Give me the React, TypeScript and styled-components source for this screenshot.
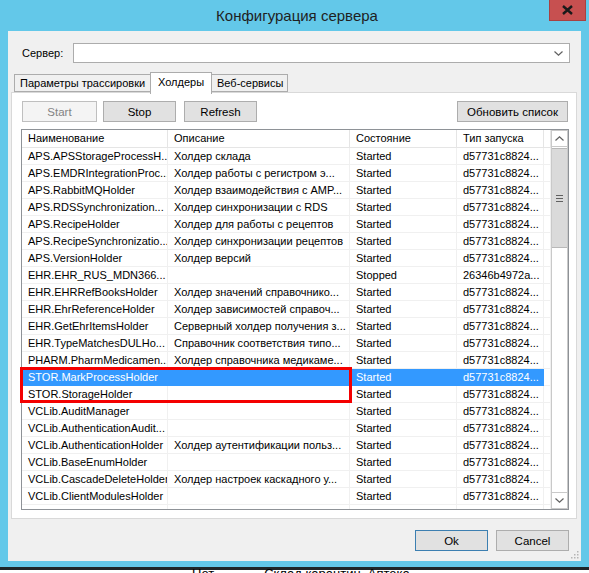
import styled, { createGlobalStyle } from 'styled-components';

const GlobalStyle = createGlobalStyle`
  html, body {
    margin: 0;
    padding: 0;
    background: #fff;
  }
  body {
    font-family: 'Liberation Sans', Arial, sans-serif;
    font-size: 11px;
    color: #000;
  }
  * {
    box-sizing: border-box;
  }
`;

const Screen = styled.div`
  width: 589px;
  height: 573px;
  overflow: hidden;
  background: #fff;
`;

const Window = styled.div`
  display: flex;
  flex-direction: column;
  height: 570px;
  padding: 0 8px 6px 8px;
  background: #63c8e9;
  border-bottom: 3px solid #1e2629;
`;

const TitleBar = styled.div`
  display: grid;
  grid-template-columns: 1fr auto 1fr;
  align-items: start;
  height: 31px;
  margin-right: -5px;
`;

const Title = styled.div`
  grid-column: 2;
  padding-top: 7px;
  font-size: 15px;
  color: #1f1f1f;
`;

const CloseButton = styled.div`
  grid-column: 3;
  justify-self: end;
  display: flex;
  align-items: center;
  justify-content: center;
  width: 37px;
  height: 21px;
  background: #c75050;
  border: 1px solid #a84141;
  border-top: none;
`;

const Client = styled.div`
  position: relative;
  display: flex;
  flex-direction: column;
  height: 530px;
  background: #f0f0f0;
`;

const ServerRow = styled.div`
  display: flex;
  align-items: center;
  padding: 12px 0 0 14px;
`;

const Label = styled.div`
  width: 51px;
`;

const Combo = styled.div`
  display: flex;
  align-items: center;
  justify-content: flex-end;
  width: 497px;
  height: 20px;
  padding-right: 6px;
  background: #fff;
  border: 1px solid #acacac;
`;

const TabStrip = styled.div`
  display: flex;
  align-items: flex-end;
  height: 20px;
  margin-top: 9px;
  padding-left: 6px;
`;

const Tab = styled.div<{ $active?: boolean; $width: number }>`
  position: relative;
  z-index: ${({ $active }) => ($active ? 1 : 0)};
  width: ${({ $width }) => $width}px;
  height: ${({ $active }) => ($active ? 22 : 18)}px;
  margin-bottom: ${({ $active }) => ($active ? -2 : 0)}px;
  margin-left: -1px;
  padding: ${({ $active }) => ($active ? '3px 0 0 7px' : '2px 0 0 5px')};
  background: ${({ $active }) => ($active ? '#fff' : '#f0f0f0')};
  border: 1px solid #acacac;
  border-bottom: ${({ $active }) => ($active ? 'none' : '1px solid #acacac')};
  white-space: nowrap;

  &:first-child {
    margin-left: 0;
  }
`;

const Panel = styled.div`
  display: flex;
  flex-direction: column;
  height: 427px;
  margin: 0 4px 0 3px;
  background: #fff;
  border: 1px solid #d9d9d9;
`;

const Toolbar = styled.div`
  display: flex;
  align-items: center;
  padding: 8px 8px 0 10px;
`;

const Button = styled.div<{ $width: number; $disabled?: boolean; $default?: boolean }>`
  display: flex;
  align-items: center;
  justify-content: center;
  width: ${({ $width }) => $width}px;
  height: 21px;
  font-size: 11.5px;
  background: ${({ $disabled }) => ($disabled ? '#f4f4f4' : '#e1e1e1')};
  border: 1px solid
    ${({ $disabled, $default }) => ($disabled ? '#bfbfbf' : $default ? '#3c7fb1' : '#adadad')};
  color: ${({ $disabled }) => ($disabled ? '#838383' : '#000')};
`;

const ToolbarGap = styled.div<{ $w: number }>`
  width: ${({ $w }) => $w}px;
  flex: none;
`;

const Spacer = styled.div`
  flex: 1;
`;

const List = styled.div`
  position: relative;
  display: flex;
  width: 548px;
  height: 381px;
  margin: 7px 0 0 9px;
  border: 1px solid #8e9297;
`;

const Table = styled.div`
  flex: 1;
  overflow: hidden;
`;

const columns = '146px 182px 107px 87px 1fr';

const HeaderRow = styled.div`
  display: grid;
  grid-template-columns: ${columns};
  height: 18px;
  border-bottom: 1px solid #e5e5e5;
`;

const HeaderCell = styled.div`
  padding: 2px 0 0 6px;
  border-right: 1px solid #e5e5e5;
  white-space: nowrap;
  overflow: hidden;
`;

const Row = styled.div<{ $selected?: boolean }>`
  display: grid;
  grid-template-columns: ${columns};
  height: 17px;
  color: ${({ $selected }) => ($selected ? '#fff' : '#000')};
`;

const Cell = styled.div<{ $selected?: boolean }>`
  height: 17px;
  padding: 1px 0 0 6px;
  line-height: 15px;
  white-space: nowrap;
  overflow: hidden;
  background: ${({ $selected }) => ($selected ? '#3399ff' : 'transparent')};
  border-right: 1px solid ${({ $selected }) => ($selected ? '#3399ff' : '#f0f0f0')};
  border-bottom: 1px solid ${({ $selected }) => ($selected ? '#3399ff' : '#f0f0f0')};
`;

const Scrollbar = styled.div`
  display: flex;
  flex-direction: column;
  width: 17px;
  background: #fff;
  border-left: 1px solid #c9c9c9;
  border-right: 1px solid #c9c9c9;
`;

const ArrowBox = styled.div`
  display: flex;
  align-items: center;
  justify-content: center;
  height: 17px;
  border-top: 1px solid #c9c9c9;
  border-bottom: 1px solid #c9c9c9;
`;

const Thumb = styled.div`
  display: flex;
  flex-direction: column;
  align-items: center;
  justify-content: center;
  gap: 2px;
  height: 100px;
  margin: 1px 0 0;
  background: #dadada;
  border-top: 1px solid #b8b8b8;
  border-bottom: 1px solid #b8b8b8;
`;

const GripLine = styled.div`
  width: 7px;
  height: 1px;
  background: #606060;
`;

const Track = styled.div`
  flex: 1;
`;

const Highlight = styled.div`
  position: absolute;
  left: -2px;
  top: 237px;
  width: 332px;
  height: 36px;
  border: 3px solid #f40000;
  pointer-events: none;
`;

const Footer = styled.div`
  display: flex;
  justify-content: flex-end;
  gap: 8px;
  margin-top: 11px;
  padding-right: 12px;
`;

const Grip = styled.svg`
  position: absolute;
  right: 2px;
  bottom: 2px;
`;

const Beneath = styled.div`
  display: flex;
  padding-left: 192px;
  gap: 50px;
  font-size: 13px;
  line-height: 8px;
`;

type Holder = {
  name: string;
  description: string;
  state: string;
  launch: string;
};

const started = 'd57731c8824...';

const holders: Holder[] = [
  { name: 'APS.APSStorageProcessH...', description: 'Холдер склада', state: 'Started', launch: started },
  { name: 'APS.EMDRIntegrationProc...', description: 'Холдер работы с регистром э...', state: 'Started', launch: started },
  { name: 'APS.RabbitMQHolder', description: 'Холдер взаимодействия с AMP...', state: 'Started', launch: started },
  { name: 'APS.RDSSynchronization...', description: 'Холдер синхронизации с RDS', state: 'Started', launch: started },
  { name: 'APS.RecipeHolder', description: 'Холдер для работы с рецептов', state: 'Started', launch: started },
  { name: 'APS.RecipeSynchronizatio...', description: 'Холдер синхронизации рецептов', state: 'Started', launch: started },
  { name: 'APS.VersionHolder', description: 'Холдер версий', state: 'Started', launch: started },
  { name: 'EHR.EHR_RUS_MDN366...', description: '', state: 'Stopped', launch: '26346b4972a...' },
  { name: 'EHR.EHRRefBooksHolder', description: 'Холдер значений справочнико...', state: 'Started', launch: started },
  { name: 'EHR.EhrReferenceHolder', description: 'Холдер зависимостей справоч...', state: 'Started', launch: started },
  { name: 'EHR.GetEhrItemsHolder', description: 'Серверный холдер получения з...', state: 'Started', launch: started },
  { name: 'EHR.TypeMatchesDULHo...', description: 'Справочник соответствия типо...', state: 'Started', launch: started },
  { name: 'PHARM.PharmMedicamen...', description: 'Холдер справочника медикаме...', state: 'Started', launch: started },
  { name: 'STOR.MarkProcessHolder', description: '', state: 'Started', launch: started },
  { name: 'STOR.StorageHolder', description: '', state: 'Started', launch: started },
  { name: 'VCLib.AuditManager', description: '', state: 'Started', launch: started },
  { name: 'VCLib.AuthenticationAudit...', description: '', state: 'Started', launch: started },
  { name: 'VCLib.AuthenticationHolder', description: 'Холдер аутентификации польз...', state: 'Started', launch: started },
  { name: 'VCLib.BaseEnumHolder', description: '', state: 'Started', launch: started },
  { name: 'VCLib.CascadeDeleteHolder', description: 'Холдер настроек каскадного у...', state: 'Started', launch: started },
  { name: 'VCLib.ClientModulesHolder', description: '', state: 'Started', launch: started },
  { name: '', description: '', state: '', launch: '' },
];

const SELECTED = 'STOR.MarkProcessHolder';

const Chevron = ({ up }: { up?: boolean }) => (
  <svg width="9" height="5" viewBox="0 0 9 5">
    <path
      d={up ? 'M0.5 4.5 L4.5 0.8 L8.5 4.5' : 'M0.5 0.5 L4.5 4.2 L8.5 0.5'}
      fill="none"
      stroke="#606060"
      strokeWidth="1.2"
    />
  </svg>
);

export default function App() {
  return (
    <Screen>
      <GlobalStyle />
      <Window>
        <TitleBar>
          <Title>Конфигурация сервера</Title>
          <CloseButton>
            <svg width="11" height="10" viewBox="0 0 11 10">
              <path d="M1 1 L10 9 M10 1 L1 9" stroke="#1a1a1a" strokeWidth="2.4" />
            </svg>
          </CloseButton>
        </TitleBar>

        <Client>
          <ServerRow>
            <Label>Сервер:</Label>
            <Combo>
              <Chevron />
            </Combo>
          </ServerRow>

          <TabStrip>
            <Tab $width={137}>Параметры трассировки</Tab>
            <Tab $width={62} $active>
              Холдеры
            </Tab>
            <Tab $width={77}>Веб-сервисы</Tab>
          </TabStrip>

          <Panel>
            <Toolbar>
              <Button $width={75} $disabled>
                Start
              </Button>
              <ToolbarGap $w={6} />
              <Button $width={73}>Stop</Button>
              <ToolbarGap $w={8} />
              <Button $width={73}>Refresh</Button>
              <Spacer />
              <Button $width={111}>Обновить список</Button>
            </Toolbar>

            <List>
              <Table>
                <HeaderRow>
                  <HeaderCell>Наименование</HeaderCell>
                  <HeaderCell>Описание</HeaderCell>
                  <HeaderCell>Состояние</HeaderCell>
                  <HeaderCell>Тип запуска</HeaderCell>
                  <HeaderCell />
                </HeaderRow>
                {holders.map((h, i) => {
                  const sel = h.name === SELECTED;
                  return (
                    <Row key={i} $selected={sel}>
                      <Cell $selected={sel}>{h.name}</Cell>
                      <Cell $selected={sel}>{h.description}</Cell>
                      <Cell $selected={sel}>{h.state}</Cell>
                      <Cell $selected={sel}>{h.launch}</Cell>
                      <Cell />
                    </Row>
                  );
                })}
              </Table>
              <Scrollbar>
                <ArrowBox>
                  <Chevron up />
                </ArrowBox>
                <Thumb>
                  <GripLine />
                  <GripLine />
                  <GripLine />
                </Thumb>
                <Track />
                <ArrowBox>
                  <Chevron />
                </ArrowBox>
              </Scrollbar>
              <Highlight />
            </List>
          </Panel>

          <Footer>
            <Button $width={73} $default>
              Ok
            </Button>
            <Button $width={73}>Cancel</Button>
          </Footer>

          <Grip width="9" height="9" viewBox="0 0 9 9">
            {[
              [7, 1],
              [7, 4],
              [4, 4],
              [7, 7],
              [4, 7],
              [1, 7],
            ].map(([x, y]) => (
              <rect key={`${x}-${y}`} x={x} y={y} width="1.5" height="1.5" fill="#b5b5b5" />
            ))}
          </Grip>
        </Client>
      </Window>
      <Beneath>
        <span>Нет</span>
        <span>Склад карантин&nbsp;&nbsp;Аптека</span>
      </Beneath>
    </Screen>
  );
}
